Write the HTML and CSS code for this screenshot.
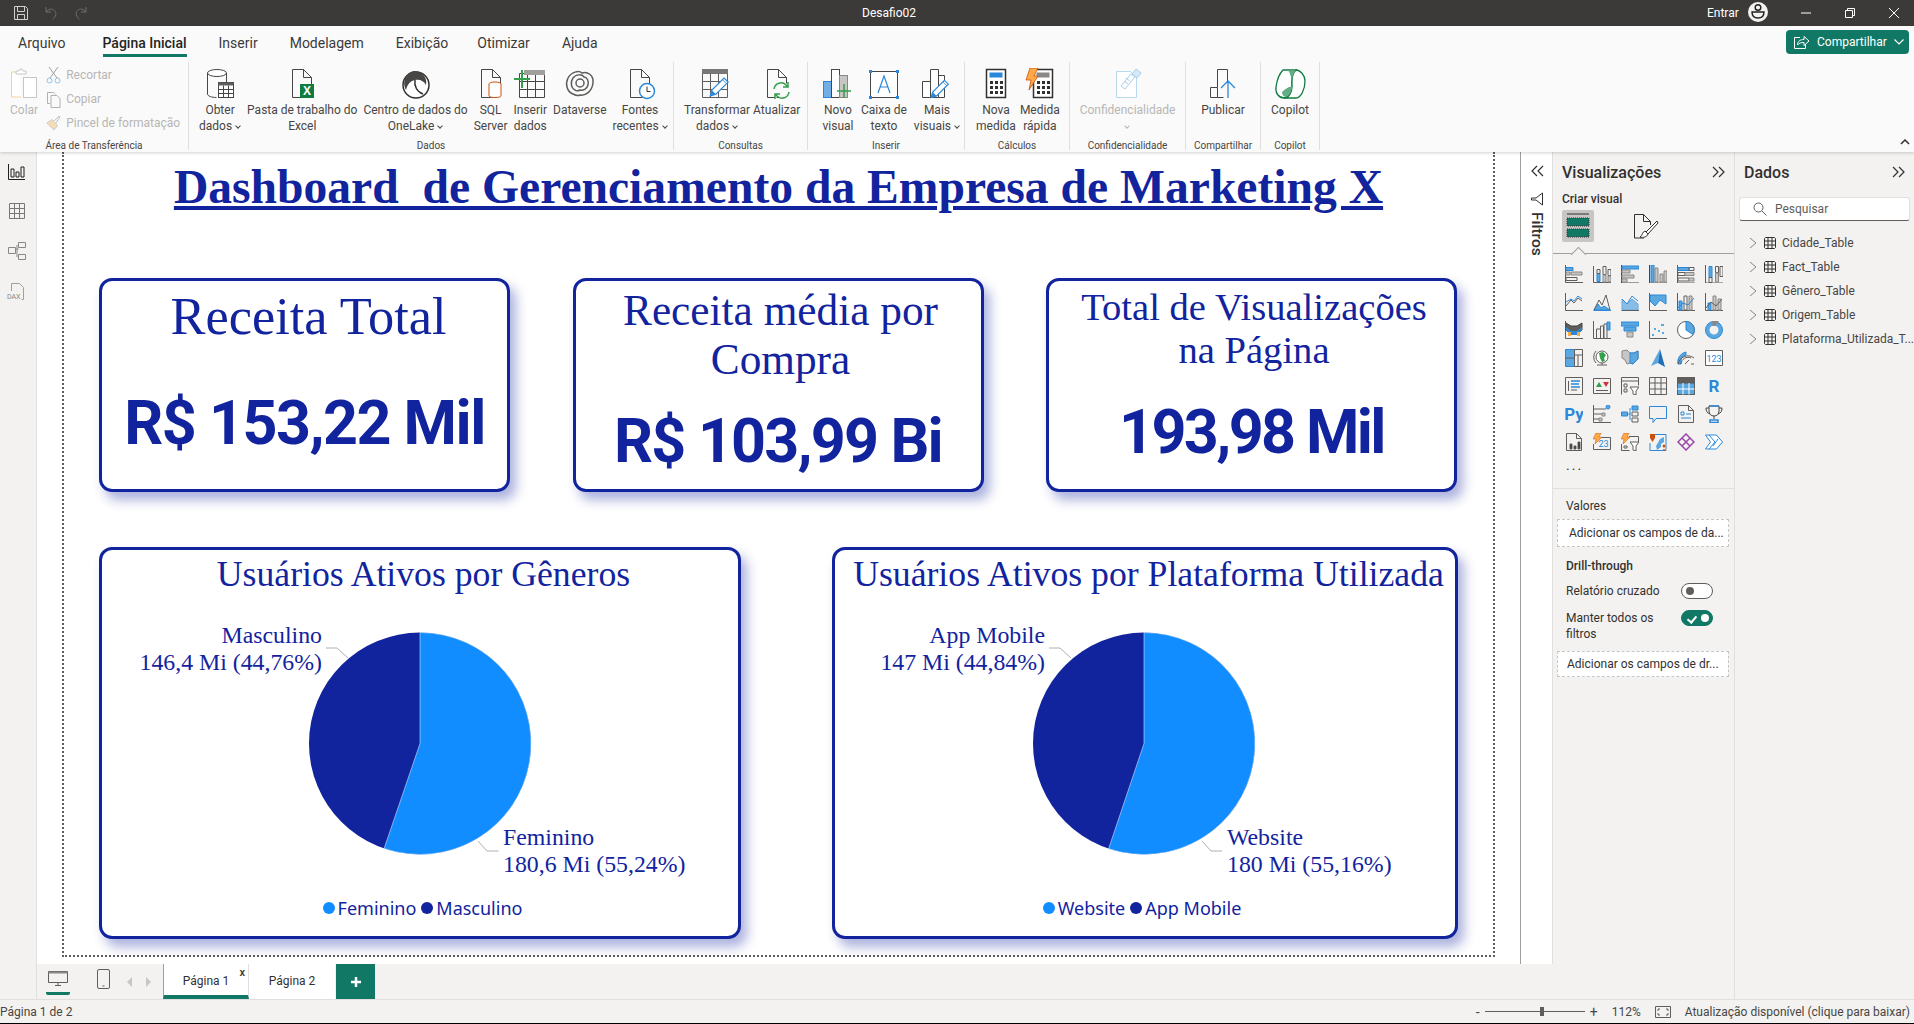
FILE: index.html
```html
<!DOCTYPE html>
<html lang="pt-BR">
<head>
<meta charset="UTF-8">
<title>Desafio02</title>
<link rel="stylesheet" href="styles.css">
</head>
<body>
<svg class="defs">
	<symbol id="page" viewBox="0 0 32 32"><path d="M6.500 1.500h11l8 8v8M6.500 1.500v28h12M17.500 1.500v8h8" fill="none" stroke="#484644"/></symbol>
	<symbol id="pencil" viewBox="0 0 32 32"><path d="M4 30l2-7L21 8l5 5-15 15z" fill="#fff" stroke="#2b88d8" stroke-width="1.500"/><path d="M4 30l2-7 5 5z" fill="#2b88d8"/><path d="M19 10l5 5" stroke="#2b88d8"/></symbol>
	<symbol id="grid" viewBox="0 0 18 18"><path d="M1.500 1.500h15v15h-15zM1.500 6.500h15M1.500 11.500h15M6.500 1.500v15M11.500 1.500v15" fill="none" stroke="#797775"/></symbol>
	<symbol id="tbl" viewBox="0 0 12 12"><path d="M1.500.5h9l1 1v9l-1 1h-9l-1-1v-9zM.5 4h11M.5 8h11M4 .5v11M8 .5v11" fill="none" stroke="#323130"/></symbol>
	<symbol id="chev" viewBox="0 0 8 12"><path d="M1 1l6 5-6 5" fill="none" stroke="#8a8886"/></symbol>
	<symbol id="dbl" viewBox="0 0 14 12"><path d="M1 1l5 5-5 5M7 1l5 5-5 5" fill="none" stroke="#323130" stroke-width="1.200"/></symbol>
</svg>

<header class="titlebar">
	<div class="qat">
		<svg width="16" height="16" viewBox="0 0 16 16"><path d="M1.500 1.500h11l2 2v11h-13zM4.500 1.500v5h7v-5M4.500 14.500v-5h7v5" fill="none" stroke="#d2d0ce"/></svg>
		<svg width="16" height="16" viewBox="0 0 16 16"><path d="M3 2v5h5M3.500 7C5 4 9 3 11.500 5.500s1.500 6-2 9" fill="none" stroke="#6f6d6b"/></svg>
		<svg width="16" height="16" viewBox="0 0 16 16"><path d="M13 2v5H8M12.500 7C11 4 7 3 4.500 5.500s-1.500 6 2 9" fill="none" stroke="#6f6d6b"/></svg>
	</div>
	<div class="doc-name">Desafio02</div>
	<div class="win">
		<span class="signin">Entrar</span>
		<svg class="avatar" width="20" height="20" viewBox="0 0 20 20"><circle cx="10" cy="10" r="10" fill="#f3f2f1"/><circle cx="10" cy="5.500" r="2.800" fill="none" stroke="#201f1e" stroke-width="1.400"/><path d="M4 10h12c0 4-2.500 6-6 6s-6-2-6-6z" fill="none" stroke="#201f1e" stroke-width="1.400"/></svg>
		<svg width="12" height="12" viewBox="0 0 12 12"><path d="M1 6h10" stroke="#fff"/></svg>
		<svg width="12" height="12" viewBox="0 0 12 12"><path d="M1.500 3.500h7v7h-7zM3.500 3.500v-2h7v7h-2" fill="none" stroke="#fff"/></svg>
		<svg width="12" height="12" viewBox="0 0 12 12"><path d="M1 1l10 10M11 1L1 11" stroke="#fff"/></svg>
	</div>
</header>

<section class="ribbon">
	<nav class="tabs">
		<a class="tab">Arquivo</a>
		<a class="tab active">Página Inicial</a>
		<a class="tab">Inserir</a>
		<a class="tab">Modelagem</a>
		<a class="tab">Exibição</a>
		<a class="tab">Otimizar</a>
		<a class="tab">Ajuda</a>
		<button class="share">
			<svg width="17" height="15" viewBox="0 0 17 15"><path d="M7 2.500H1.500v11h11V9M4.500 10c0-4 3-5.500 6.500-5.500V1.500l5 4.500-5 4.500v-3c-3 0-5 .5-6.500 2.500z" fill="none" stroke="#fff"/></svg>
			<span>Compartilhar</span>
			<svg width="10" height="6" viewBox="0 0 10 6"><path d="M.5.500L5 5 9.500.5" fill="none" stroke="#fff" stroke-width="1.200"/></svg>
		</button>
	</nav>
	<div class="groups">
		<div class="rgroup g-clip">
			<div class="items">
				<div class="ritem off">
					<svg class="ic" width="28" height="32" viewBox="0 0 28 32"><path d="M9 4H1.500v25H11" fill="#fff" stroke="#f4cfa0"/><path d="M6 6V3h3l1-2h2l1 2h3v3z" fill="#fff" stroke="#c8c6c4"/><rect x="13.500" y="9.500" width="13" height="20" fill="#fff" stroke="#c8c6c4"/></svg>
					<span>Colar</span>
				</div>
				<div class="mini-list">
					<div class="mini"><svg width="15" height="18" viewBox="0 0 15 18"><path d="M3 1l8 11M12 1L4 12" stroke="#a19f9d"/><circle cx="3.500" cy="14.500" r="2.500" fill="none" stroke="#8fc1ea"/><circle cx="11.500" cy="14.500" r="2.500" fill="none" stroke="#8fc1ea"/></svg>Recortar</div>
					<div class="mini"><svg width="15" height="18" viewBox="0 0 15 18"><path d="M4 13.500H1.500v-11h6l2 2M5 5.500h6l3 3v9H5z" fill="none" stroke="#b3b0ad"/></svg>Copiar</div>
					<div class="mini"><svg width="15" height="18" viewBox="0 0 17 18"><path d="M1 9l6-4 6 7-4 5z" fill="#f6dcb8" stroke="#c8c6c4"/><path d="M9 7l6-6 1 1-5 7" fill="#fff" stroke="#b3b0ad"/></svg>Pincel de formatação</div>
				</div>
			</div>
			<div class="rlabel">Área de Transferência</div>
		</div>

		<div class="rgroup g-data">
			<div class="items">
				<div class="ritem">
					<svg class="ic" width="32" height="32" viewBox="0 0 32 32"><ellipse cx="13" cy="5" rx="9.500" ry="3.500" fill="#fff" stroke="#484644"/><path d="M3.500 5v21c0 2 4 3.500 9 3.500M22.500 5v9" fill="none" stroke="#484644"/><rect x="14.500" y="14.500" width="15" height="15" fill="#fff" stroke="#484644"/><path d="M14.500 14.500h15v3h-15z" fill="#605e5c"/><path d="M14.500 21.500h15M14.500 25.500h15M19.500 17.500v12M24.500 17.500v12" stroke="#484644"/></svg>
					<span>Obter<br>dados<i class="caret"></i></span>
				</div>
				<div class="ritem">
					<svg class="ic" width="32" height="32" viewBox="0 0 32 32"><use href="#page"/><rect x="14" y="16" width="14" height="14" fill="#107c41"/><text x="21" y="27" class="xl">X</text></svg>
					<span>Pasta de trabalho do<br>Excel</span>
				</div>
				<div class="ritem">
					<svg class="ic" width="32" height="32" viewBox="0 0 32 32"><circle cx="16" cy="17" r="13" fill="#fff" stroke="#323130" stroke-width="1.500"/><path d="M7 7c-3 4-4 10-1 15 1-5 4-9 9-10 5-1 9 1 11 5 1-5-1-9-4-11C18 2 11 2 7 7z" fill="#484644"/><path d="M15 12c-1 6 2 12 8 14" fill="none" stroke="#323130" stroke-width="1.500"/></svg>
					<span>Centro de dados do<br>OneLake<i class="caret"></i></span>
				</div>
				<div class="ritem">
					<svg class="ic" width="32" height="32" viewBox="0 0 32 32"><use href="#page"/><ellipse cx="20" cy="16" rx="6" ry="2" fill="#fff" stroke="#ca5010"/><path d="M14 16v12c0 2 12 2 12 0V16" fill="#fff" stroke="#ca5010"/></svg>
					<span>SQL<br>Server</span>
				</div>
				<div class="ritem">
					<svg class="ic" width="32" height="32" viewBox="0 0 32 32"><path d="M5.500 5.500h25v24h-25zM5.500 13.500h25M5.500 21.500h25M13.500 5.500v24M21.500 5.500v24" fill="none" stroke="#484644"/><rect x="10" y="2" width="21" height="5" fill="#a19f9d"/><path d="M0 11h16M8 2v18" stroke="#33a04b" stroke-width="2"/></svg>
					<span>Inserir<br>dados</span>
				</div>
				<div class="ritem">
					<svg class="ic" width="32" height="32" viewBox="0 0 32 32"><path d="M9 26C3 24 1 16 4 10s11-8 14-5c5-2 12 2 11 10s-7 13-13 12c-2 1-5 0-7-1z" fill="none" stroke="#605e5c" stroke-width="1.500"/><path d="M11 22c-4-2-5-8-2-12s9-4 11-1c3 0 5 4 4 8s-5 6-8 5c-2 1-4 1-5 0z" fill="none" stroke="#605e5c" stroke-width="1.500"/><circle cx="16" cy="15" r="4" fill="none" stroke="#605e5c" stroke-width="1.500"/></svg>
					<span>Dataverse</span>
				</div>
				<div class="ritem">
					<svg class="ic" width="32" height="32" viewBox="0 0 32 32"><use href="#page"/><circle cx="23" cy="23" r="7.500" fill="#fff" stroke="#2b88d8" stroke-width="1.500"/><path d="M23 18.500V23.500h3.500" fill="none" stroke="#323130"/></svg>
					<span>Fontes<br>recentes<i class="caret"></i></span>
				</div>
			</div>
			<div class="rlabel">Dados</div>
		</div>

		<div class="rgroup g-query">
			<div class="items">
				<div class="ritem">
					<svg class="ic" width="32" height="32" viewBox="0 0 32 32"><path d="M1.500 5.500h25v24h-25zM1.500 13.500h25M1.500 21.500h25M9.500 5.500v24M17.500 5.500v24" fill="none" stroke="#605e5c"/><rect x="1" y="1" width="26" height="5" fill="#797775"/><use href="#pencil" x="6" y="1" width="26" height="31"/></svg>
					<span>Transformar<br>dados<i class="caret"></i></span>
				</div>
				<div class="ritem">
					<svg class="ic" width="32" height="32" viewBox="0 0 32 32"><use href="#page"/><path d="M13 21a7 7 0 0 1 12-4l2 2M28 24a7 7 0 0 1-12 4l-2-2M27 14v5h-5M14 31v-5h5" fill="#fafafa" stroke="#33a04b" stroke-width="1.500"/></svg>
					<span>Atualizar</span>
				</div>
			</div>
			<div class="rlabel">Consultas</div>
		</div>

		<div class="rgroup g-insert">
			<div class="items">
				<div class="ritem">
					<svg class="ic" width="32" height="32" viewBox="0 0 32 32"><rect x="1.500" y="13.500" width="8" height="16" fill="#71afe5" stroke="#2b88d8"/><rect x="9.500" y="1.500" width="8" height="28" fill="#fff" stroke="#484644"/><rect x="17.500" y="7.500" width="8" height="22" fill="#c8c6c4" stroke="#8a8886"/><path d="M15 23h14M22 16v14" stroke="#33a04b" stroke-width="1.500"/></svg>
					<span>Novo<br>visual</span>
				</div>
				<div class="ritem">
					<svg class="ic" width="32" height="32" viewBox="0 0 32 32"><rect x="2.500" y="3.500" width="27" height="26" fill="#fff" stroke="#484644"/><path d="M1 2h3v3H1zM28 2h3v3h-3zM1 28h3v3H1zM28 28h3v3h-3z" fill="#2b88d8"/><path d="M10 25l6-17 6 17M12 19h8" fill="none" stroke="#2b88d8" stroke-width="1.200"/></svg>
					<span>Caixa de<br>texto</span>
				</div>
				<div class="ritem">
					<svg class="ic" width="32" height="32" viewBox="0 0 32 32"><path d="M1.500 13.500h8v16h-8zM9.500 1.500h8v28h-8zM17.500 7.500h6v22h-6z" fill="#fff" stroke="#484644"/><use href="#pencil" x="7" y="5" width="25" height="27"/></svg>
					<span>Mais<br>visuais<i class="caret"></i></span>
				</div>
			</div>
			<div class="rlabel">Inserir</div>
		</div>

		<div class="rgroup g-calc">
			<div class="items">
				<div class="ritem">
					<svg class="ic" width="32" height="32" viewBox="0 0 32 32"><rect x="6.500" y="1.500" width="19" height="28" fill="#fff" stroke="#323130" stroke-width="1.500"/><rect x="9.500" y="4.500" width="13" height="5" fill="#2b88d8"/><path d="M10 13h3v3h-3zM15 13h3v3h-3zM20 13h3v3h-3zM10 18h3v3h-3zM15 18h3v3h-3zM20 18h3v3h-3zM10 23h3v3h-3zM15 23h3v3h-3zM20 23h3v3h-3z" fill="#323130"/></svg>
					<span>Nova<br>medida</span>
				</div>
				<div class="ritem">
					<svg class="ic" width="32" height="32" viewBox="0 0 32 32"><rect x="9.500" y="1.500" width="19" height="28" fill="#fff" stroke="#323130" stroke-width="1.500"/><rect x="12.500" y="4.500" width="13" height="5" fill="#8a8886"/><path d="M13 13h3v3h-3zM18 13h3v3h-3zM23 13h3v3h-3zM13 18h3v3h-3zM18 18h3v3h-3zM23 18h3v3h-3zM13 23h3v3h-3zM18 23h3v3h-3zM23 23h3v3h-3z" fill="#323130"/><path d="M6 0h8l-4 8h4L5 22l2-10H2z" fill="#ffaa44" stroke="#ca5010" stroke-width=".8"/></svg>
					<span>Medida<br>rápida</span>
				</div>
			</div>
			<div class="rlabel">Cálculos</div>
		</div>

		<div class="rgroup g-sens">
			<div class="items">
				<div class="ritem off">
					<svg class="ic" width="32" height="32" viewBox="0 0 32 32"><path d="M4.500 3.500h14l6 6v20h-20z" fill="#fff" stroke="#b8d8f0"/><path d="M9 18l10-12 4 3-10 12zM12 13l4 3M14 10l4 3" fill="none" stroke="#a6cfee"/><path d="M20 6l4-5 5 4-4 5z" fill="#d7e9f7" stroke="#a6cfee"/></svg>
					<span>Confidencialidade<br><i class="caret solo"></i></span>
				</div>
			</div>
			<div class="rlabel">Confidencialidade</div>
		</div>

		<div class="rgroup g-pub">
			<div class="items">
				<div class="ritem">
					<svg class="ic" width="32" height="32" viewBox="0 0 32 32"><path d="M3.500 19.500h7v10h-7zM10.500 19.500v-18h10v12M10.500 29.500h6" fill="none" stroke="#484644"/><path d="M21 30V13M14 20l7-7 7 7" fill="none" stroke="#2b88d8" stroke-width="1.300"/></svg>
					<span>Publicar</span>
				</div>
			</div>
			<div class="rlabel">Compartilhar</div>
		</div>

		<div class="rgroup g-cop">
			<div class="items">
				<div class="ritem">
					<svg class="ic" width="32" height="32" viewBox="0 0 32 32"><path d="M9 2h13c-3 3-4 7-4 11v6c0 5-3 11-8 11-5 0-9-5-8-11 1-7 3-13 7-17z" fill="#fff" stroke="#107c41" stroke-width="1.300"/><path d="M22 2c4 0 9 5 9 11 0 8-4 17-9 17H10c5 0 8-6 8-11v-6c0-4 1-8 4-11z" fill="#fff" stroke="#107c41" stroke-width="1.300"/><path d="M14 2.500h8c-3 3-4 7-4 11-1-5-2-9-4-11zM8 24c4-4 8-6 10-5 0 4-3 10-7 10-2-1-3-3-3-5z" fill="#63ad85"/></svg>
					<span>Copilot</span>
				</div>
			</div>
			<div class="rlabel">Copilot</div>
		</div>
		<svg class="collapse" width="10" height="6" viewBox="0 0 10 6"><path d="M1 5l4-4 4 4" fill="none" stroke="#323130" stroke-width="1.500"/></svg>
	</div>
</section>

<main class="workspace">
	<aside class="rail">
		<svg width="18" height="18" viewBox="0 0 18 18"><path d="M.5 1v15.500H17M3 6h3v8H3zM8 9h3v5H8zM13 4h3v10h-3z" fill="none" stroke="#201f1e"/></svg>
		<svg width="18" height="18" viewBox="0 0 18 18"><use href="#grid" /></svg>
		<svg width="20" height="20" viewBox="0 0 20 20"><path d="M1.500 6.500h7v6h-7zM11.500 1.500h7v5h-7zM11.500 13.500h7v5h-7zM8.500 8h3M10 4v12" fill="none" stroke="#8a8886"/></svg>
		<svg width="20" height="20" viewBox="0 0 20 20"><path d="M4.500 9V1.500h8l4 4v12h-2" fill="none" stroke="#a19f9d"/><text x="0" y="17" class="dax">DAX</text></svg>
	</aside>

	<div class="center">
		<div class="view">
			<div class="canvas">
				<div class="report">
					<h1 class="report-title">Dashboard&nbsp; de Gerenciamento da Empresa de Marketing X</h1>

					<div class="kpis">
						<article class="card kpi k1">
							<div class="kpi-title">Receita Total</div>
							<div class="kpi-value">R$ 153,22 Mil</div>
						</article>
						<article class="card kpi k2">
							<div class="kpi-title">Receita média por<br>Compra</div>
							<div class="kpi-value">R$ 103,99 Bi</div>
						</article>
						<article class="card kpi k3">
							<div class="kpi-title">Total de Visualizações<br>na Página</div>
							<div class="kpi-value">193,98 Mil</div>
						</article>
					</div>

					<div class="pies">
						<article class="card pie p1">
							<div class="pie-title">Usuários Ativos por Gêneros</div>
							<svg class="pie-chart" viewBox="0 0 636 284">
								<circle cx="318" cy="145.500" r="111" fill="#12239e"/>
								<path d="M318 145.500V34.500A111 111 0 1 1 282.100 250.500Z" fill="#118dff" stroke="#fff" stroke-width=".5"/>
								<path class="leader" d="M224 50h11l11 10M376 243l9 10h11.500"/>
								<text class="plabel end" x="220" y="45">Masculino</text>
								<text class="plabel end" x="220" y="72">146,4 Mi (44,76%)</text>
								<text class="plabel" x="401" y="247">Feminino</text>
								<text class="plabel" x="401" y="274">180,6 Mi (55,24%)</text>
							</svg>
							<div class="legend">
								<span class="dot light"></span><span>Feminino</span>
								<span class="dot dark"></span><span>Masculino</span>
							</div>
						</article>
						<article class="card pie p2">
							<div class="pie-title">Usuários Ativos por Plataforma Utilizada</div>
							<svg class="pie-chart" viewBox="0 0 620 284">
								<circle cx="309" cy="145.500" r="111" fill="#12239e"/>
								<path d="M309 145.500V34.500A111 111 0 1 1 273.600 250.700Z" fill="#118dff" stroke="#fff" stroke-width=".5"/>
								<path class="leader" d="M214 50h11l11 10M367 243l9 10h11"/>
								<text class="plabel end" x="210" y="45">App Mobile</text>
								<text class="plabel end" x="210" y="72">147 Mi (44,84%)</text>
								<text class="plabel" x="392" y="247">Website</text>
								<text class="plabel" x="392" y="274">180 Mi (55,16%)</text>
							</svg>
							<div class="legend">
								<span class="dot light"></span><span>Website</span>
								<span class="dot dark"></span><span>App Mobile</span>
							</div>
						</article>
					</div>
				</div>
			</div>
			<aside class="filters">
				<svg width="14" height="12" viewBox="0 0 14 12"><path d="M13 1L8 6l5 5M7 1L2 6l5 5" fill="none" stroke="#323130" stroke-width="1.200"/></svg>
				<svg width="12" height="14" viewBox="0 0 12 14"><path d="M11.500 1v12L5 8H.5V6H5z" fill="none" stroke="#323130"/></svg>
				<span class="filters-text">Filtros</span>
			</aside>
		</div>
		<div class="pagebar">
			<div class="device on"><svg width="20" height="15" viewBox="0 0 20 15"><path d="M.5.500h19v11H.5zM7 14.500h6M10 11.500v3" fill="none" stroke="#605e5c"/><path d="M.5.500h19v2H.5z" fill="#8a8886"/></svg></div>
			<div class="device phone"><svg width="13" height="20" viewBox="0 0 13 20"><rect x=".5" y=".5" width="12" height="19" rx="1.500" fill="none" stroke="#605e5c"/><path d="M5.500 17h2" stroke="#605e5c"/></svg></div>
			<div class="arrows"><i class="arrow left"></i><i class="arrow right"></i></div>
			<div class="ptab cur">Página 1<span class="x">x</span></div>
			<div class="ptab">Página 2</div>
			<div class="ptab add"><svg width="12" height="12" viewBox="0 0 12 12"><path d="M6 1v10M1 6h10" stroke="#fff" stroke-width="2.500"/></svg></div>
		</div>
	</div>

	<aside class="pane viz">
		<div class="pane-head"><span>Visualizações</span><svg width="14" height="12"><use href="#dbl"/></svg></div>
		<div class="sub">Criar visual</div>
		<div class="mode">
			<div class="mode-btn sel">
				<svg width="24" height="26" viewBox="0 0 24 26"><path d="M1 1h22" stroke="#323130"/><rect x="1" y="5" width="22" height="8" fill="#117865" stroke="#323130" stroke-dasharray="1 1"/><rect x="1" y="16" width="22" height="8" fill="#117865" stroke="#323130" stroke-dasharray="1 1"/></svg>
			</div>
			<div class="mode-btn">
				<svg width="26" height="26" viewBox="0 0 26 26"><path d="M11 25H1.500V1.500h9l7 7V12M10.500 1.500v7h7" fill="none" stroke="#323130"/><path d="M24 8L13 19l2 2L25 10z" fill="#fff" stroke="#323130"/><path d="M12 18c-3 1-2 4-5 6 3 1 7 0 8-3z" fill="#fff" stroke="#323130"/></svg>
			</div>
		</div>
		<div class="mode-line"></div>
		<div class="vgrid">
			<svg class="v" viewBox="0 0 18 18"><path d="M.5 0v17.500H18"/><path class="b" d="M1 2.500h7v3H1z"/><path class="g" d="M1 7h4v3H1zM6 7h11v3H6z"/><path d="M1 12.500h11v3H1z"/></svg>
			<svg class="v" viewBox="0 0 18 18"><path d="M.5 1v16.500H18"/><path class="b" d="M4 8.500h3v8H4z"/><path d="M4 4.500h3v4H4zM10 1.500h3v8h-3zM15 4.500h3v6h-3z"/><path class="g" d="M10 10h3v7h-3zM15 11h3v6h-3z"/></svg>
			<svg class="v" viewBox="0 0 18 18"><path class="d" d="M.5 0v18H18"/><path class="b" d="M1 1h17v3H1z"/><path class="g" d="M1 5h8v3H1zM1 10h12v3H1zM1 14h5v3H1z"/></svg>
			<svg class="v" viewBox="0 0 18 18"><path class="d" d="M.5 0v18H18"/><path class="b" d="M2 0h3v17H2z"/><path class="g" d="M6 3h3v14H6zM11 9h3v8h-3zM15 6h3v11h-3z"/></svg>
			<svg class="v" viewBox="0 0 18 18"><path d="M.5 0v18H18"/><path class="b" d="M1 2.500h11v3H1z"/><path d="M12 2.500h5v3h-5zM1 7.500h7v3H1zM1 13h11v3H1z"/><path class="g" d="M8 7.500h9v3H8zM12 13h5v3h-5z"/></svg>
			<svg class="v" viewBox="0 0 18 18"><path d="M.5 0v18H18"/><path class="b" d="M4 1.500h3v11H4z"/><path d="M4 12.500h3v5H4zM10.500 1.500h3v6h-3zM15 1.500h3v10h-3z"/><path class="g" d="M10.500 8h3v9h-3z"/></svg>

			<svg class="v" viewBox="0 0 18 18"><path d="M.5 0v17.500H18M1 13l5-6 3 3 4-5 4 3"/><path class="bl" d="M1 9l5-3 3 2 4-5 4 3"/></svg>
			<svg class="v" viewBox="0 0 18 18"><path class="b" d="M1 17l4-6 3 4 3-2 6 4z"/><path d="M1 17L6 7l3 5 4-10 4 15"/><path class="bl" d="M.5 17.500H18"/></svg>
			<svg class="v" viewBox="0 0 18 18"><path class="b" d="M1 6l5 5 5-5 6 5v6H1z" opacity=".7"/><path class="bl" d="M1 6l5 5 5-8 6 5"/><path d="M.5 17.500H18"/></svg>
			<svg class="v" viewBox="0 0 18 18"><path class="b" d="M1 2h16v9l-6-4-5 6-5-5z"/><path d="M.5 0v17.500H18"/></svg>
			<svg class="v" viewBox="0 0 18 18"><path d="M.5 0v17.500H18"/><path class="g" d="M12 3h3v14h-3z"/><path class="b" d="M2 8h3v9H2z"/><path d="M7 3h3v14H7z"/><path class="bl" d="M1 15l5-5 5 2 6-7" stroke="#323130"/></svg>
			<svg class="v" viewBox="0 0 18 18"><path d="M.5 0v17.500H18"/><path class="b" d="M3 10h3v7H3z"/><path class="g" d="M8 3h3v14H8zM13 6h3v11h-3z"/><path d="M1 15l5-6 5 4 6-7"/></svg>

			<svg class="v" viewBox="0 0 18 18"><path d="M.5 0v17.500H18"/><path class="d" d="M1 2l5 3h6l5-3v7l-5 4H6L1 9z" fill="#605e5c"/><path d="M1 6l5 4h6l5-4v3l-5 5H6L1 9z" fill="#2b88d8" stroke="none"/><path d="M3 11h3v4H3zM12 11h3v4h-3z" fill="#f7a94a" stroke="none"/></svg>
			<svg class="v" viewBox="0 0 18 18"><path d="M.5 0v17.500H18M3.500 17V8h4v9M7.500 8V5h3v12M11 17V3h3v14"/><path class="b" d="M14 1h3v8h-3z"/></svg>
			<svg class="v" viewBox="0 0 18 18"><path class="b" d="M0 1h18v4H0z"/><path class="b" d="M3 6h12v4H3z"/><path class="g" d="M6 11h6v5H6z"/></svg>
			<svg class="v" viewBox="0 0 18 18"><path d="M.5 0v17.500H18"/><path class="dots" d="M12 3h3v2h-3zM5 7h2v2H5zM9 9h2v2H9zM13 11h2v2h-2zM3 13h2v2H3z"/></svg>
			<svg class="v" viewBox="0 0 18 18"><circle cx="9" cy="9" r="8.500" fill="#fff"/><path class="b" d="M9 9V.5a8.500 8.500 0 0 1 7 13z"/></svg>
			<svg class="v" viewBox="0 0 18 18"><circle cx="9" cy="9" r="6.500" fill="none" stroke="#5ba7e0" stroke-width="4"/><circle cx="9" cy="9" r="8.500" stroke="#2b88d8"/><path d="M9 5V.5a8.500 8.500 0 0 1 4 1" stroke="#8a8886" stroke-width="3.500"/></svg>

			<svg class="v" viewBox="0 0 18 18"><path class="b" d="M.5.500h9v17h-9z"/><path d="M.5 9h9M9.500.500h8v17h-8zM9.500 6h8M13 6v11.500"/></svg>
			<svg class="v" viewBox="0 0 18 18"><circle cx="9" cy="8" r="6" fill="#fff"/><path d="M4 16h10M9 14v2M3 2a9 9 0 0 0 0 12"/><path d="M6 4l4-1 3 3-2 3 1 3-3 1-2-4z" fill="#33a04b" stroke="none"/></svg>
			<svg class="v" viewBox="0 0 18 18"><path class="g" d="M1 2l5-1 3 3h4l4-2v8l-5 5-3-1-3 1-2-4-3-2z"/><path class="b" d="M9 4h4l4-2v8l-5 5-3-1z"/></svg>
			<svg class="v" viewBox="0 0 18 18"><path d="M11 0L2 17l7-3z" fill="#5ba7e0" stroke="none"/><path d="M11 0l-2 14 7 4z" fill="#1e6fb8" stroke="none"/></svg>
			<svg class="v" viewBox="0 0 18 18"><path class="b" d="M4 15a7 7 0 0 1 5-9V3a10 10 0 0 0-8 12z"/><path d="M1 15A10 10 0 0 1 17 9M4 15a7 7 0 0 1 10-6M17 15h-3M8 15l4-4"/></svg>
			<svg class="v" viewBox="0 0 18 18"><path d="M.5 1.500h17v15H.5z" fill="#fff"/><text x="9" y="12.500" class="small">123</text></svg>

			<svg class="v" viewBox="0 0 18 18"><path d="M.5.500h17v17H.5z"/><path d="M3.500 4v10"/><path class="bl" d="M6 4h9M6 7h8M6 10h9" stroke-width="1.500"/><path d="M6 13h6"/></svg>
			<svg class="v" viewBox="0 0 18 18"><path d="M.5 1.500h17v15H.5zM3 13.500h12"/><path d="M3 10l3-5 3 5z" fill="#33a04b" stroke="none"/><path d="M10 5h6l-3 5z" fill="#d13438" stroke="none"/></svg>
			<svg class="v" viewBox="0 0 18 18"><path d="M.5 17.500V.5h17v8M.5 4h17M3 7h3v3H3zM3 12h3v3H3z"/><path d="M9 10h9l-3 4v4l-3-1v-3z" fill="#fff"/></svg>
			<svg class="v" viewBox="0 0 18 18"><path d="M.5.500h17v17H.5zM.5 6h17M.5 12h17M6 .5v17M12 .5v17"/></svg>
			<svg class="v" viewBox="0 0 18 18"><path class="b" d="M0 6h18v12H0z"/><path d="M.5.500h17v17H.5z"/><path d="M.5.500h17V6H.5z" fill="#605e5c"/><path d="M.5 12h17M6 6v11.500M12 6v11.500" stroke="#fff"/></svg>
			<svg class="v" viewBox="0 0 18 18"><text x="9" y="15" class="letter">R</text></svg>

			<svg class="v" viewBox="0 0 18 18"><text x="9" y="15" class="letter">Py</text></svg>
			<svg class="v" viewBox="0 0 18 18"><path d="M.5 0v17.500H18M1 4h9M1 9h9M1 14h6"/><circle class="b" cx="15" cy="2" r="2"/><path class="g" d="M9 8h3v3H9zM6 13h3v3H6z"/><path d="M10 4h3"/></svg>
			<svg class="v" viewBox="0 0 18 18"><path class="b" d="M.5 7h6v4h-6z"/><path class="bl" d="M6.500 9H9M9 3v12"/><path class="b" d="M11 1h6v4h-6z"/><path d="M11 7h6v4h-6zM11 13h6v4h-6z"/></svg>
			<svg class="v" viewBox="0 0 18 18"><path class="bl" d="M.5 1.500h17v12H7l-3 4v-4H.5z"/></svg>
			<svg class="v" viewBox="0 0 18 18"><path d="M1.500 17.500V.5h10l5 5v12zM11.500.500v5h5"/><path class="bl" d="M4 7h3v3H4zM9 9h5M4 13h10"/></svg>
			<svg class="v" viewBox="0 0 18 18"><path class="d" d="M4 1h10v5c0 3-2 5-5 5S4 9 4 6zM4 3H1c0 3 1 5 4 6M14 3h3c0 3-1 5-4 6M9 11v3M5 17.500h8"/><path class="bl" d="M5 15h8v2.500H5zM4 1h10" stroke-width="1.500"/></svg>

			<svg class="v" viewBox="0 0 18 18"><path d="M1.500 17.500V.5h10l5 5v12zM11.500.500v5h5"/><path d="M5 11h2v5H5zM9 13h2v3H9zM13 9h2v7h-2z" fill="#323130"/></svg>
			<svg class="v" viewBox="0 0 18 18"><path d="M4 4.500h13.500v12H.5V11"/><text x="10.500" y="14" class="small">23</text><path d="M3 0h5L6 4h3L2 11l1-5H0z" fill="#ffaa44" stroke="#ca5010" stroke-width=".5"/></svg>
			<svg class="v" viewBox="0 0 18 18"><path d="M.5 11v6.500h8M8 3.500h9.500V9M3 13h3v2H3z"/><path d="M9 9h9l-3 4v5l-3-1v-4z" fill="#fff"/><path d="M3 0h5L6 4h3L2 11l1-5H0z" fill="#ffaa44" stroke="#ca5010" stroke-width=".5"/></svg>
			<svg class="v" viewBox="0 0 18 18"><path class="bl" d="M6 1.500h11v16H1V10"/><path d="M11 6l4-2v5l-3 2v3l-4 3-1-4z" fill="#5ba7e0" stroke="none"/><path d="M1 1h5v4L3.500 9 1 5z" fill="#ca5010" stroke="none"/><circle cx="15" cy="13" r="1.500" fill="#ca5010" stroke="none"/><circle cx="15" cy="17" r="1" fill="#ca5010" stroke="none"/></svg>
			<svg class="v" viewBox="0 0 18 18"><path class="pp" d="M9 1l8 8-8 8-8-8zM5 5l8 8M13 5l-8 8"/></svg>
			<svg class="v" viewBox="0 0 18 18"><path class="bl" d="M.5 2h11l6 7-6 7H.5l5-7zM4 2l6 7-6 7M8 13l5-7" fill="#fff"/></svg>
		</div>
		<div class="more">...</div>
		<div class="wells">
			<div class="well-label">Valores</div>
			<div class="well">Adicionar os campos de da...</div>
			<div class="well-head">Drill-through</div>
			<div class="opt"><span>Relatório cruzado</span><i class="toggle"></i></div>
			<div class="opt tall"><span>Manter todos os<br>filtros</span><i class="toggle on"></i></div>
			<div class="well low">Adicionar os campos de dr...</div>
		</div>
	</aside>

	<aside class="pane data">
		<div class="pane-head"><span>Dados</span><svg width="14" height="12"><use href="#dbl"/></svg></div>
		<div class="search">
			<svg width="14" height="14" viewBox="0 0 14 14"><circle cx="5.500" cy="5.500" r="4.500" fill="none" stroke="#605e5c"/><path d="M9 9l4.500 4.500" stroke="#605e5c"/></svg>
			<span>Pesquisar</span>
		</div>
		<ul class="tree">
			<li><svg class="c" width="8" height="12"><use href="#chev"/></svg><svg width="12" height="12"><use href="#tbl"/></svg>Cidade_Table</li>
			<li><svg class="c" width="8" height="12"><use href="#chev"/></svg><svg width="12" height="12"><use href="#tbl"/></svg>Fact_Table</li>
			<li><svg class="c" width="8" height="12"><use href="#chev"/></svg><svg width="12" height="12"><use href="#tbl"/></svg>Gênero_Table</li>
			<li><svg class="c" width="8" height="12"><use href="#chev"/></svg><svg width="12" height="12"><use href="#tbl"/></svg>Origem_Table</li>
			<li><svg class="c" width="8" height="12"><use href="#chev"/></svg><svg width="12" height="12"><use href="#tbl"/></svg>Plataforma_Utilizada_T...</li>
		</ul>
	</aside>
</main>

<footer class="status">
	<span class="status-page">Página 1 de 2</span>
	<div class="zoom">
		<span class="z-btn">-</span>
		<div class="slider"><i></i></div>
		<span class="z-btn">+</span>
		<span class="z-val">112%</span>
		<svg width="16" height="12" viewBox="0 0 16 12"><path d="M.5.500h15v11H.5z" fill="none" stroke="#605e5c"/><path d="M5 3H3v2M11 3h2v2M5 9H3V7M11 9h2V7" fill="none" stroke="#605e5c"/></svg>
		<span class="update">Atualização disponível (clique para baixar)</span>
	</div>
</footer>
</body>
</html>
```
FILE: styles.css
```css
*{
	padding: 0;
	margin: 0;
	box-sizing: border-box;
}
html,body{
	width: 1914px;
	height: 1024px;
	overflow: hidden;
}
body{
	display: flex;
	flex-direction: column;
	font-family: Roboto, "Noto Sans", sans-serif;
	font-size: 12px;
	color: #323130;
	background-color: #f3f2f1;
}
.defs{
	display: none;
}

/* barra de titulo */
.titlebar{
	height: 26px;
	flex: none;
	display: flex;
	align-items: center;
	justify-content: space-between;
	background-color: #3b3a39;
	color: #fff;
}
.qat{
	width: 200px;
	display: flex;
	gap: 14px;
	padding-left: 13px;
}
.doc-name{
	flex: 1;
	text-align: center;
	padding-right: 129px;
}
.win{
	width: 207px;
	display: flex;
	align-items: center;
}
.signin{
	width: 41px;
}
.avatar{
	margin-right: 32px;
	margin-top: -2px;
}
.win svg + svg{
	margin-right: 32px;
}
.win svg:last-child{
	margin-right: 0;
}

/* faixa de opcoes */
.ribbon{
	height: 126px;
	flex: none;
	background-color: #fafafa;
	box-shadow: 0 1px 3px rgba(0,0,0,.18);
	position: relative;
	z-index: 2;
}
.tabs{
	height: 36px;
	display: flex;
	padding-left: 2px;
	font-size: 14px;
	color: #3b3a39;
}
.tab{
	padding: 8px 16px 0;
	line-height: 19px;
	position: relative;
}
.tab:first-child{
	margin-right: 5px;
}
.tab:nth-child(6){
	margin-left: -3px;
}
.tab.active{
	font-weight: 500;
	color: #252423;
}
.tab.active::after{
	content: "";
	position: absolute;
	left: 16px;
	right: 16px;
	top: 28px;
	height: 3px;
	background-color: #117865;
}
.share{
	margin: 4px 5px 0 auto;
	width: 123px;
	height: 24px;
	display: flex;
	align-items: center;
	gap: 7px;
	padding-left: 7px;
	border: 0;
	border-radius: 4px;
	background-color: #117865;
	color: #fff;
	font: 12px Roboto, sans-serif;
}
.share svg{
	flex: none;
}
.groups{
	height: 88px;
	display: flex;
	position: relative;
}
.rgroup{
	display: flex;
	flex-direction: column;
	flex: none;
	border-right: 1px solid #e1dfdd;
}
.items{
	flex: 1;
	display: flex;
	padding-top: 6px;
}
.rlabel{
	height: 8px;
	line-height: 8px;
	text-align: center;
	font-size: 10px;
	color: #484644;
}
.ritem{
	display: flex;
	flex-direction: column;
	align-items: center;
	text-align: center;
	line-height: 16px;
	color: #484644;
	white-space: nowrap;
}
.ic{
	height: 32px;
	margin-bottom: 2px;
	flex: none;
}
.off,.mini{
	color: #b8b6b4;
}
.caret{
	display: inline-block;
	width: 4px;
	height: 4px;
	margin: 0 1px 2px 4px;
	border-right: 1px solid #484644;
	border-bottom: 1px solid #484644;
	transform: rotate(45deg);
}
.caret.solo{
	border-color: #b8b6b4;
	margin-left: 0;
}
.g-clip{ width: 189px; }
.g-clip .items{ padding-left: 10px; padding-top: 4px; gap: 8px; }
.g-clip .ritem{ padding-top: 2px; }
.mini-list{
	display: flex;
	flex-direction: column;
	gap: 6px;
	font-size: 12px;
}
.mini{
	height: 18px;
	display: flex;
	align-items: center;
	gap: 5px;
	white-space: nowrap;
}
.g-data{ width: 485px; }
.g-data .items{ padding-left: 10px; gap: 6px; }
.g-query{ width: 134px; }
.g-query .items{ padding-left: 10px; gap: 3px; }
.g-insert{ width: 157px; }
.g-insert .items{ padding-left: 14px; gap: 7px; }
.g-calc{ width: 105px; }
.g-calc .items{ padding-left: 11px; gap: 4px; }
.g-sens{ width: 116px; }
.g-pub{ width: 75px; }
.g-cop{ width: 59px; }
.g-sens .items,.g-pub .items,.g-cop .items{ justify-content: center; }
.collapse{
	position: absolute;
	right: 4px;
	bottom: 5px;
}
.xl{
	font: bold 12px "Liberation Sans", sans-serif;
	fill: #fff;
	text-anchor: middle;
}

/* area de trabalho */
.workspace{
	flex: 1;
	min-height: 0;
	display: flex;
}
.rail{
	width: 37px;
	flex: none;
	display: flex;
	flex-direction: column;
	align-items: center;
	gap: 21px;
	padding: 11px 3px 0 0;
	border-right: 1px solid #e1dfdd;
}
.center{
	width: 1516px;
	flex: none;
	display: flex;
	flex-direction: column;
}
.view{
	height: 812px;
	display: flex;
}
.canvas{
	width: 1483px;
	flex: none;
	background-color: #fff;
	padding: 0 25px 0 25px;
	overflow: hidden;
}
.report{
	height: 805px;
	border: 2px dotted #605e5c;
	border-top: 0;
	padding: 0 35px;
}
.report-title{
	height: 126px;
	padding-top: 7px;
	text-align: center;
	font: bold 47.600px/56px "Liberation Serif", serif;
	color: #12239e;
	text-decoration: underline;
}
.card{
	background-color: #fff;
	border: 3px solid #12239e;
	border-radius: 13px;
	box-shadow: 6px 8px 12px rgba(18,35,158,.35);
}
.kpis{
	display: grid;
	grid-template-columns: repeat(3,411px);
	gap: 62.500px;
}
.kpi{
	height: 214px;
	display: flex;
	flex-direction: column;
	align-items: center;
	font-family: "Liberation Serif", serif;
	color: #12239e;
	text-align: center;
}
.kpi-value{
	font: bold 61px/72px Roboto, sans-serif;
	white-space: nowrap;
}
.kpi-title{
	padding-left: 5px;
}
.k1 .kpi-title{
	font-size: 52.400px;
	line-height: 60px;
	margin-top: 5px;
	padding-left: 8px;
}
.k1 .kpi-value{
	margin-top: 41px;
	letter-spacing: -1.500px;
}
.k2 .kpi-title{
	font-size: 43.300px;
	line-height: 49px;
	margin-top: 5px;
}
.k2 .kpi-value{
	margin-top: 21px;
	letter-spacing: -1.800px;
}
.k3 .kpi-title{
	font-size: 38.600px;
	line-height: 43px;
	margin-top: 5px;
}
.k3 .kpi-value{
	margin-top: 24px;
	letter-spacing: -2.600px;
}
.pies{
	display: flex;
	justify-content: space-between;
	margin-top: 55px;
}
.pie{
	height: 392px;
	display: flex;
	flex-direction: column;
	align-items: center;
}
.p1{ width: 642px; }
.p2{ width: 626px; }
.pie-title{
	height: 48px;
	line-height: 48px;
	padding-left: 7px;
	font-family: "Liberation Serif", serif;
	font-size: 35.700px;
	color: #12239e;
	white-space: nowrap;
}
.pie-chart{
	width: 100%;
	height: 284px;
	flex: none;
	overflow: visible;
}
.leader{
	fill: none;
	stroke: #b3b0ad;
}
.plabel{
	font-family: "Liberation Serif", serif;
	font-size: 23.800px;
	fill: #12239e;
}
.end{
	text-anchor: end;
}
.legend{
	display: flex;
	align-items: center;
	height: 42px;
	padding-top: 10px;
	font-family: "Noto Sans", sans-serif;
	font-size: 18px;
	color: #12239e;
}
.dot{
	width: 12px;
	height: 12px;
	border-radius: 50%;
	margin: 0 3px 0 5px;
}
.dot.light{ background-color: #118dff; }
.dot.dark{ background-color: #12239e; }
.p2 .legend{
	padding-right: 11px;
}

/* painel de filtros */
.filters{
	width: 33px;
	flex: none;
	display: flex;
	flex-direction: column;
	align-items: center;
	padding-top: 13px;
	gap: 15px;
	border-left: 1px solid #a19f9d;
	border-right: 1px solid #e1dfdd;
	background-color: #fff;
}
.filters-text{
	writing-mode: vertical-rl;
	font-size: 15.500px;
	font-weight: 500;
	margin-top: -9px;
	color: #323130;
}

/* abas de pagina */
.pagebar{
	height: 35px;
	display: flex;
	background-color: #f3f2f1;
}
.device{
	width: 24px;
	margin-left: 9px;
	height: 31px;
	padding-top: 7px;
	display: flex;
	justify-content: center;
}
.device.on{
	border-bottom: 3px solid #117865;
	border-radius: 0 0 2px 2px;
}
.device.phone{
	margin-left: 21px;
	padding-top: 5px;
}
.arrows{
	width: 41px;
	margin-left: 7px;
	display: flex;
	gap: 14px;
	padding: 13px 0 0 5px;
}
.arrow{
	width: 0;
	height: 0;
	border: 5px solid transparent;
	border-left-width: 0;
	border-right: 5px solid #c8c6c4;
}
.arrow.right{
	transform: scaleX(-1);
}
.ptab{
	width: 86px;
	background-color: #fff;
	text-align: center;
	line-height: 35px;
	position: relative;
}
.ptab.cur{
	border-left: 1px solid #a19f9d;
	border-bottom: 4px solid #117865;
	border-right: 1px solid #e1dfdd;
}
.ptab .x{
	position: absolute;
	top: 3px;
	right: 3px;
	line-height: 12px;
	font-size: 11px;
	font-weight: 500;
}
.ptab.add{
	width: 39px;
	margin-left: 1px;
	background-color: #117865;
	display: flex;
	align-items: center;
	justify-content: center;
}

/* paineis laterais */
.pane{
	flex: none;
	border-right: 1px solid #e1dfdd;
	display: flex;
	flex-direction: column;
}
.viz{
	width: 182px;
}
.data{
	width: 179px;
	border-right: 0;
}
.pane-head{
	height: 40px;
	flex: none;
	display: flex;
	align-items: center;
	justify-content: space-between;
	padding: 0 8px 0 9px;
	font-size: 16px;
	font-weight: 500;
}
.sub{
	padding-left: 9px;
	margin-top: -1px;
	line-height: 16px;
	font-weight: 500;
}
.mode{
	height: 32px;
	margin-top: 3px;
	padding-left: 9px;
	display: flex;
}
.mode-btn{
	width: 32px;
	height: 32px;
	display: flex;
	align-items: center;
	justify-content: center;
}
.mode-btn.sel{
	background-color: #c8c6c4;
	border-radius: 2px;
	margin-right: 36px;
}
.mode-line{
	height: 12px;
	flex: none;
	border-bottom: 1px solid #a19f9d;
	position: relative;
}
.mode-line::after{
	content: "";
	position: absolute;
	left: 20px;
	top: 7px;
	width: 10px;
	height: 10px;
	background-color: #f3f2f1;
	border-top: 1px solid #a19f9d;
	border-left: 1px solid #a19f9d;
	transform: rotate(45deg);
}
.vgrid{
	display: grid;
	grid-template-columns: repeat(6,18px);
	grid-auto-rows: 18px;
	gap: 10px;
	padding: 11px 0 0 12px;
}
.v{
	width: 18px;
	height: 18px;
	fill: none;
	stroke: #605e5c;
}
.v .b{ fill: #5ba7e0; stroke: #2b88d8; }
.v .g{ fill: #c8c6c4; stroke: #8a8886; }
.v .d{ stroke: #484644; }
.v .bl{ stroke: #2b88d8; }
.v .dots{ fill: #5ba7e0; stroke: none; }
.v .pp{ stroke: #9a44a8; stroke-width: 1.500; }
.v .small{
	font-size: 9px;
	fill: #2b88d8;
	stroke: none;
	text-anchor: middle;
}
.v .letter{
	font-size: 17px;
	font-weight: 700;
	fill: #2b88d8;
	stroke: none;
	text-anchor: middle;
}
.dax{
	font-size: 7px;
	fill: #8a8886;
}
.more{
	height: 38px;
	padding: 7px 0 0 13px;
	font-size: 14px;
	letter-spacing: 2px;
	line-height: 14px;
	border-bottom: 1px solid #e1dfdd;
	flex: none;
}
.wells{
	padding: 9px 5px 0 4px;
}
.well-label{
	padding-left: 9px;
	line-height: 16px;
	margin-bottom: 5px;
}
.well{
	height: 28px;
	line-height: 27px;
	padding-left: 11px;
	background-color: #fff;
	border: 1px dashed #c8c6c4;
	white-space: nowrap;
}
.well-head{
	padding-left: 9px;
	font-weight: 500;
	line-height: 16px;
	margin-top: 11px;
}
.opt{
	display: flex;
	justify-content: space-between;
	padding: 0 16px 0 9px;
	line-height: 16px;
	margin-top: 9px;
}
.opt.tall{
	margin-top: 11px;
}
.toggle{
	width: 32px;
	height: 16px;
	border: 1px solid #605e5c;
	border-radius: 8px;
	background-color: #fff;
	position: relative;
}
.toggle::after{
	content: "";
	position: absolute;
	left: 4px;
	top: 3px;
	width: 8px;
	height: 8px;
	border-radius: 50%;
	background-color: #605e5c;
}
.toggle.on{
	background-color: #117865;
	border-color: #117865;
}
.toggle.on::after{
	left: 19px;
	background-color: #fff;
}
.toggle.on::before{
	content: "";
	position: absolute;
	left: 7px;
	top: 3px;
	width: 4px;
	height: 7px;
	border-right: 2px solid #fff;
	border-bottom: 2px solid #fff;
	transform: rotate(40deg);
}
.well.low{
	height: 26px;
	line-height: 25px;
	margin-top: 9px;
	padding-left: 9px;
}
.search{
	height: 24px;
	margin: 5px 4px 0 4px;
	padding-left: 13px;
	display: flex;
	align-items: center;
	gap: 8px;
	background-color: #fff;
	border: 1px solid #e1dfdd;
	border-bottom-color: #605e5c;
	border-radius: 3px;
	color: #605e5c;
}
.tree{
	list-style: none;
	padding: 10px 0 0 14px;
}
.tree li{
	height: 24px;
	display: flex;
	align-items: center;
	gap: 6px;
	color: #484644;
	white-space: nowrap;
}
.tree .c{
	margin-right: 1px;
}

/* barra de status */
.status{
	height: 25px;
	flex: none;
	display: flex;
	align-items: center;
	justify-content: space-between;
	border-top: 1px solid #e1dfdd;
	border-bottom: 1px solid #000;
	color: #484644;
}
.zoom{
	display: flex;
	align-items: center;
	padding-right: 4px;
}
.z-btn{
	font-size: 14px;
	width: 10px;
	text-align: center;
}
.slider{
	width: 100px;
	height: 1px;
	margin: 0 4px 0 2px;
	background-color: #605e5c;
	position: relative;
}
.slider i{
	position: absolute;
	left: 55px;
	top: -4px;
	width: 4px;
	height: 9px;
	background-color: #605e5c;
}
.z-val{
	margin: 0 14px 0 13px;
}
.update{
	margin-left: 14px;
}
```
